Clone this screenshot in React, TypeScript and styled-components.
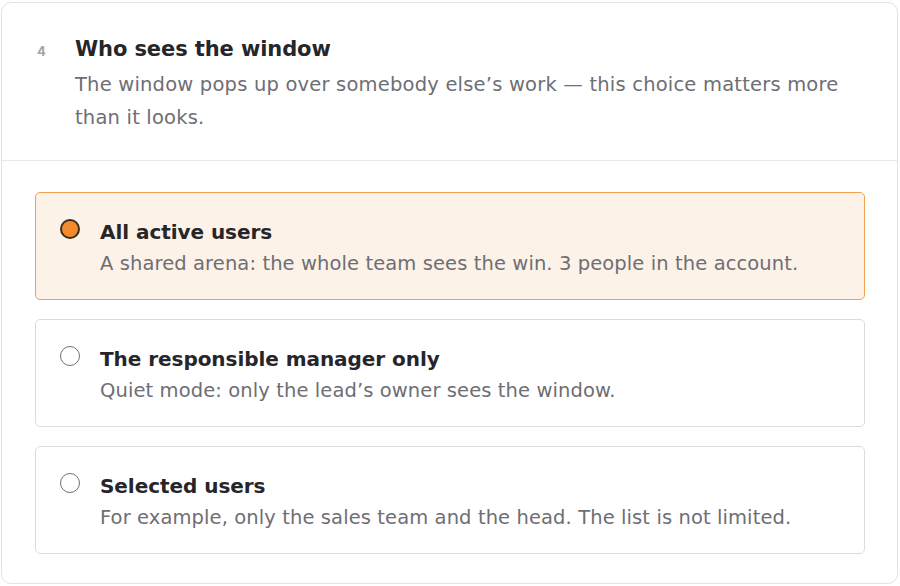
import React, { useState } from "react";
import styled, { createGlobalStyle } from "styled-components";

const Global = createGlobalStyle`
  html, body { margin: 0; padding: 0; background: #ffffff; }
  body { font-family: "DejaVu Sans", "Inter", sans-serif; -webkit-font-smoothing: antialiased; }
  * { box-sizing: border-box; }
`;

const Page = styled.div`
  padding: 2px 2px 2px 1px;
  width: 900px;
  height: 586px;
`;

const Card = styled.section`
  border: 1px solid #e2e2e4;
  border-radius: 10px;
  background: #fff;
  height: 582px;
  display: flex;
  flex-direction: column;
`;

const Header = styled.header`
  display: grid;
  grid-template-columns: 39px 1fr;
  padding: 31px 34px 26px 34px;
  border-bottom: 1px solid #e8e8ea;
`;

const StepNum = styled.span`
  font-family: "Inter", sans-serif;
  font-size: 13px;
  font-weight: 700;
  color: #a4a4a8;
  padding-top: 9px;
  padding-left: 1px;
`;

const Title = styled.h2`
  margin: 0;
  font-size: 21px;
  font-weight: 700;
  color: #26262a;
  letter-spacing: -0.1px;
  line-height: 30px;
`;

const Desc = styled.p`
  margin: 4px 0 0;
  font-size: 19.5px;
  line-height: 33px;
  color: #6e6e74;
  letter-spacing: 0.2px;
`;

const Options = styled.div`
  display: flex;
  flex-direction: column;
  gap: 19px;
  padding: 31px 32px 0 33px;
`;

const Option = styled.label<{ $active: boolean }>`
  display: grid;
  grid-template-columns: 40px 1fr;
  height: 108px;
  padding: 26px 20px 0 24px;
  border: 1px solid ${(p) => (p.$active ? "#f0a152" : "#dcdcde")};
  background: ${(p) => (p.$active ? "#fdf2e8" : "#fff")};
  border-radius: 5px;
  cursor: pointer;
`;

const Radio = styled.span<{ $active: boolean }>`
  width: 20px;
  height: 20px;
  border-radius: 50%;
  border: ${(p) => (p.$active ? "2.5px solid #3b2c1f" : "1.5px solid #707074")};
  background: ${(p) => (p.$active ? "#f58a2a" : "#fff")};
`;

const OptTitle = styled.div`
  font-size: 20px;
  font-weight: 700;
  color: #26262a;
  line-height: 24px;
  margin-top: 1px;
  letter-spacing: -0.05px;
`;

const OptDesc = styled.div`
  margin-top: 8px;
  font-size: 19.5px;
  line-height: 24px;
  color: #6e6e74;
  letter-spacing: 0.1px;
`;

const options = [
  {
    title: "All active users",
    desc: "A shared arena: the whole team sees the win. 3 people in the account.",
  },
  {
    title: "The responsible manager only",
    desc: "Quiet mode: only the lead’s owner sees the window.",
  },
  {
    title: "Selected users",
    desc: "For example, only the sales team and the head. The list is not limited.",
  },
];

export default function App() {
  const [sel, setSel] = useState(0);
  return (
    <Page>
      <Global />
      <Card>
        <Header>
          <StepNum>4</StepNum>
          <div>
            <Title>Who sees the window</Title>
            <Desc>
              The window pops up over somebody else’s work — this choice matters more than it looks.
            </Desc>
          </div>
        </Header>
        <Options>
          {options.map((o, i) => (
            <Option key={o.title} $active={sel === i} onClick={() => setSel(i)}>
              <Radio $active={sel === i} />
              <div>
                <OptTitle>{o.title}</OptTitle>
                <OptDesc>{o.desc}</OptDesc>
              </div>
            </Option>
          ))}
        </Options>
      </Card>
    </Page>
  );
}
